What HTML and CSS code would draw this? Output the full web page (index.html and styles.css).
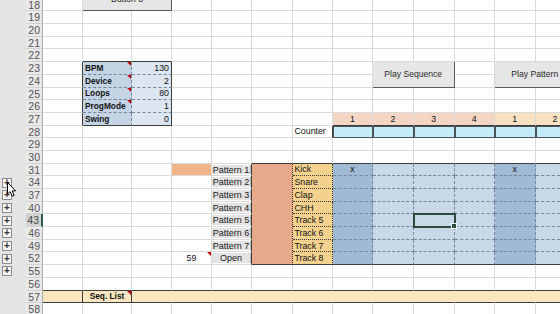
FILE: index.html
```html
<!DOCTYPE html>
<html lang="en">
<head>
  <meta charset="UTF-8">
  <title>Sequencer</title>
  <link rel="stylesheet" href="styles.css">
</head>
<body>
  <div class="sheet" id="sheet"></div>
  <svg class="cursor" width="10" height="16" viewBox="0 0 10 16">
    <path d="M0.5 0.5 L0.5 12 L3.1 9.6 L5.2 14.2 L7.1 13.4 L5.1 8.9 L8.6 8.9 Z" fill="#fff" stroke="#000" stroke-width="1" stroke-linejoin="round"/>
  </svg>
  <script>
    const sheet = document.getElementById('sheet');
    const rowNums = [18,19,20,21,22,23,24,25,26,27,28,29,30,31,34,37,40,43,46,49,52,55,56,57,58];
    const cols = 'ABCDEFGHIJKLM';
    const grouped = [34,37,40,43,46,49,52,55]; // rows with a collapsed group
    const params = {23:['BPM','130'], 24:['Device','2'], 25:['Loops','80'], 26:['ProgMode','1'], 27:['Swing','0']};
    const patternRows = [31,34,37,40,43,46,49,52];
    const patterns = ['Pattern 1','Pattern 2','Pattern 3','Pattern 4','Pattern 5','Pattern 6','Pattern 7','Open'];
    const tracks = ['Kick','Snare','Clap','CHH','Track 5','Track 6','Track 7','Track 8'];
    const stepHead = {H:'1', I:'2', J:'3', K:'4', L:'1', M:'2'};
    const covered = new Set();

    // what one cell of the sheet looks like
    function describe(r, col) {
      const c = {cls: [], text: ''};
      const k = patternRows.indexOf(r);
      const step = 'HIJKLM'.includes(col);
      if (r === 18 && col === 'B') { c.cls.push('btn', 'btn-cut'); c.text = 'Button 3'; c.cols = 2; }
      if (r === 22 && 'BC'.includes(col)) c.cls.push('bk');
      if (params[r]) {
        if (col === 'A') c.cls.push('rk');
        if (col === 'B') { c.cls.push('param', 'bold', 'rd'); c.text = params[r][0]; if (r < 27) c.cls.push('note'); }
        if (col === 'C') { c.cls.push('val', 'rk'); c.text = params[r][1]; }
        if ('BC'.includes(col)) c.cls.push(r < 27 ? 'bd' : 'bk');
      }
      if (r === 23 && 'IL'.includes(col)) {
        c.cls.push('btn', 'play');
        c.text = col === 'I' ? 'Play Sequence' : 'Play Pattern';
        c.cols = 2; c.rows = 2;
      }
      if (r === 27 && step) { c.cls.push('bk', 'center', 'LM'.includes(col) ? 'head-b' : 'head-a'); c.text = stepHead[col]; }
      if (r === 28) {
        if (col === 'G') { c.cls.push('rk'); c.text = 'Counter'; }
        if (step) c.cls.push('counter');
      }
      if (r === 30 && 'FGHIJKLM'.includes(col)) c.cls.push('bk');
      if (r === 31 && col === 'D') c.cls.push('orange');
      if (k >= 0) {
        const last = k === 7;
        if (col === 'E') { c.button = patterns[k]; c.cls.push('pat', 'rk'); }
        if (col === 'F' && k === 0) { c.cls.push('salmon', 'rdot', 'bk'); c.rows = 8; }
        if (col === 'G') { c.cls.push('track', 'rdot', last ? 'bk' : 'bdot'); c.text = tracks[k]; }
        if (step) {
          c.cls.push('HL'.includes(col) ? 'beat' : 'step', 'center', 'rd', last ? 'bk' : 'bd');
          if (k === 0 && 'HL'.includes(col)) c.text = 'x';
        }
      }
      if (r === 52 && col === 'D') { c.cls.push('center', 'note'); c.text = '59'; }
      if (r === 43 && col === 'J') c.cls.push('sel');
      if (r === 56) c.cls.push('bk');
      if (r === 57) {
        c.cls.push('cream', 'bk', 'AB'.includes(col) ? 'rk' : 'rnone');
        if (col === 'B') { c.cls.push('bold', 'center', 'note'); c.text = 'Seq. List'; }
      }
      return c;
    }

    rowNums.forEach((r, i) => {
      const head = document.createElement('div');
      head.className = 'rh' + (r === 43 ? ' active' : '');
      head.innerHTML = '<span class="outline">' + (grouped.includes(r) ? '<span class="plus">+</span>' : '') +
        '</span><span class="num">' + r + '</span>';
      sheet.appendChild(head);

      [...cols].forEach((col, j) => {
        if (covered.has(col + r)) return;
        const d = describe(r, col);
        const el = document.createElement('div');
        el.className = ['cell', ...d.cls].join(' ');
        if (d.rows || d.cols) {
          el.style.gridRow = 'span ' + (d.rows || 1);
          el.style.gridColumn = 'span ' + (d.cols || 1);
          for (let a = 0; a < (d.rows || 1); a++)
            for (let b = 0; b < (d.cols || 1); b++)
              if (a || b) covered.add(cols[j + b] + rowNums[i + a]);
        }
        if (d.button) el.innerHTML = '<span class="pbtn">' + d.button + '</span>';
        else if (d.text) el.innerHTML = '<span>' + d.text + '</span>';
        sheet.appendChild(el);
      });
    });
  </script>
</body>
</html>
```

FILE: styles.css
```css
body {
  margin: 0;
  background: #fff;
  overflow: hidden;
  font-family: "Liberation Sans", Arial, sans-serif;
}
.sheet {
  display: grid;
  grid-template-columns: 43px 40px 49px 40px 40px 40px 40.5px 40.5px 40px 41px 40.5px 40.5px 40.5px 40px;
  grid-template-rows: repeat(25, 12.7px);
  margin-top: -1.3px;
  width: max-content;
}

/* row headers with the outline bar */
.rh {
  display: flex;
}
.outline {
  width: 26px;
  background: #e4e4e4;
  display: flex;
  align-items: center;
  padding-left: 2px;
  box-sizing: border-box;
}
.plus {
  width: 10px;
  height: 10px;
  box-sizing: border-box;
  border: 1px solid #8c8c8c;
  background: #f5f5f5;
  font-size: 10px;
  font-weight: bold;
  line-height: 8px;
  text-align: center;
  color: #333;
}
.num {
  flex: 1;
  background: #e9e9e9;
  border-bottom: 1px solid #d2d2d2;
  border-right: 1px solid #ababab;
  font-size: 10.5px;
  line-height: 12px;
  color: #555;
  text-align: right;
  padding-right: 2px;
}
.rh.active .num {
  background: #d2d2d2;
  color: #3d4a43;
  border-right: 2px solid #2f5d45;
}

/* cells */
.cell {
  box-sizing: border-box;
  border-right: 1px solid #dadada;
  border-bottom: 1px solid #dadada;
  font-size: 8.8px;
  color: #111;
  display: flex;
  align-items: center;
  padding: 0 2px;
  white-space: nowrap;
  overflow: hidden;
  min-width: 0;
}
.center { justify-content: center; }
.val { justify-content: flex-end; }
.bold { font-weight: bold; font-size: 8.3px; }

.rd { border-right-style: dashed; border-right-color: #74879c; }
.bd { border-bottom-style: dashed; border-bottom-color: #74879c; }
.rdot { border-right-style: dotted; border-right-color: #3a3a3a; }
.bdot { border-bottom-style: dotted; border-bottom-color: #3a3a3a; }
.rk { border-right-style: solid; border-right-color: #3c3c3c; }
.bk { border-bottom-style: solid; border-bottom-color: #3c3c3c; }
.rnone { border-right-color: transparent; }

.param { background: #c5d4e5; }
.val { background: #dce6f1; }
.head-a { background: #f5d5c3; }
.head-b { background: #f8e1c3; }
.counter {
  background: #c4ecf8;
  border-right: 1px solid #4b5257;
  border-bottom: 1px solid #4b5257;
  box-shadow: inset 1px 1px 0 #4b5257;
}
.orange { background: #f0b589; }
.salmon { background: #e6aa8a; }
.track { background: #f3d290; }
.beat { background: #a1bad4; }
.step { background: #c9d8e6; }
.cream { background: #f9e5c0; }

/* comment marker */
.note { position: relative; }
.note::after {
  content: '';
  position: absolute;
  top: 0;
  right: 0;
  border-top: 4px solid #c00000;
  border-left: 4px solid transparent;
}

/* active cell */
.sel {
  position: relative;
  z-index: 2;
  overflow: visible;
  outline: 2px solid #2a4b3c;
  outline-offset: -1px;
}
.sel::after {
  content: '';
  position: absolute;
  right: -3px;
  bottom: -3px;
  width: 4px;
  height: 4px;
  background: #2a4b3c;
  border: 1px solid #fff;
}

/* form buttons on the sheet */
.btn {
  background: #e6e6e6;
  border-right: 1px solid #5a5a5a;
  border-bottom: 1px solid #5a5a5a;
  justify-content: center;
  color: #2a2a2a;
  font-size: 8.6px;
}
.btn-cut { align-items: flex-start; }
.btn-cut span {
  line-height: 10px;
  margin-top: -5px;
}
.pat { padding: 0; }
.pbtn {
  flex: 1;
  align-self: stretch;
  margin: 1px 0;
  background: #e3e3e3;
  border-right: 1px solid #b8b8b8;
  text-align: center;
  font-size: 9px;
  line-height: 10.5px;
  color: #1a1a1a;
}

.cursor {
  position: absolute;
  left: 7px;
  top: 182px;
}
```
